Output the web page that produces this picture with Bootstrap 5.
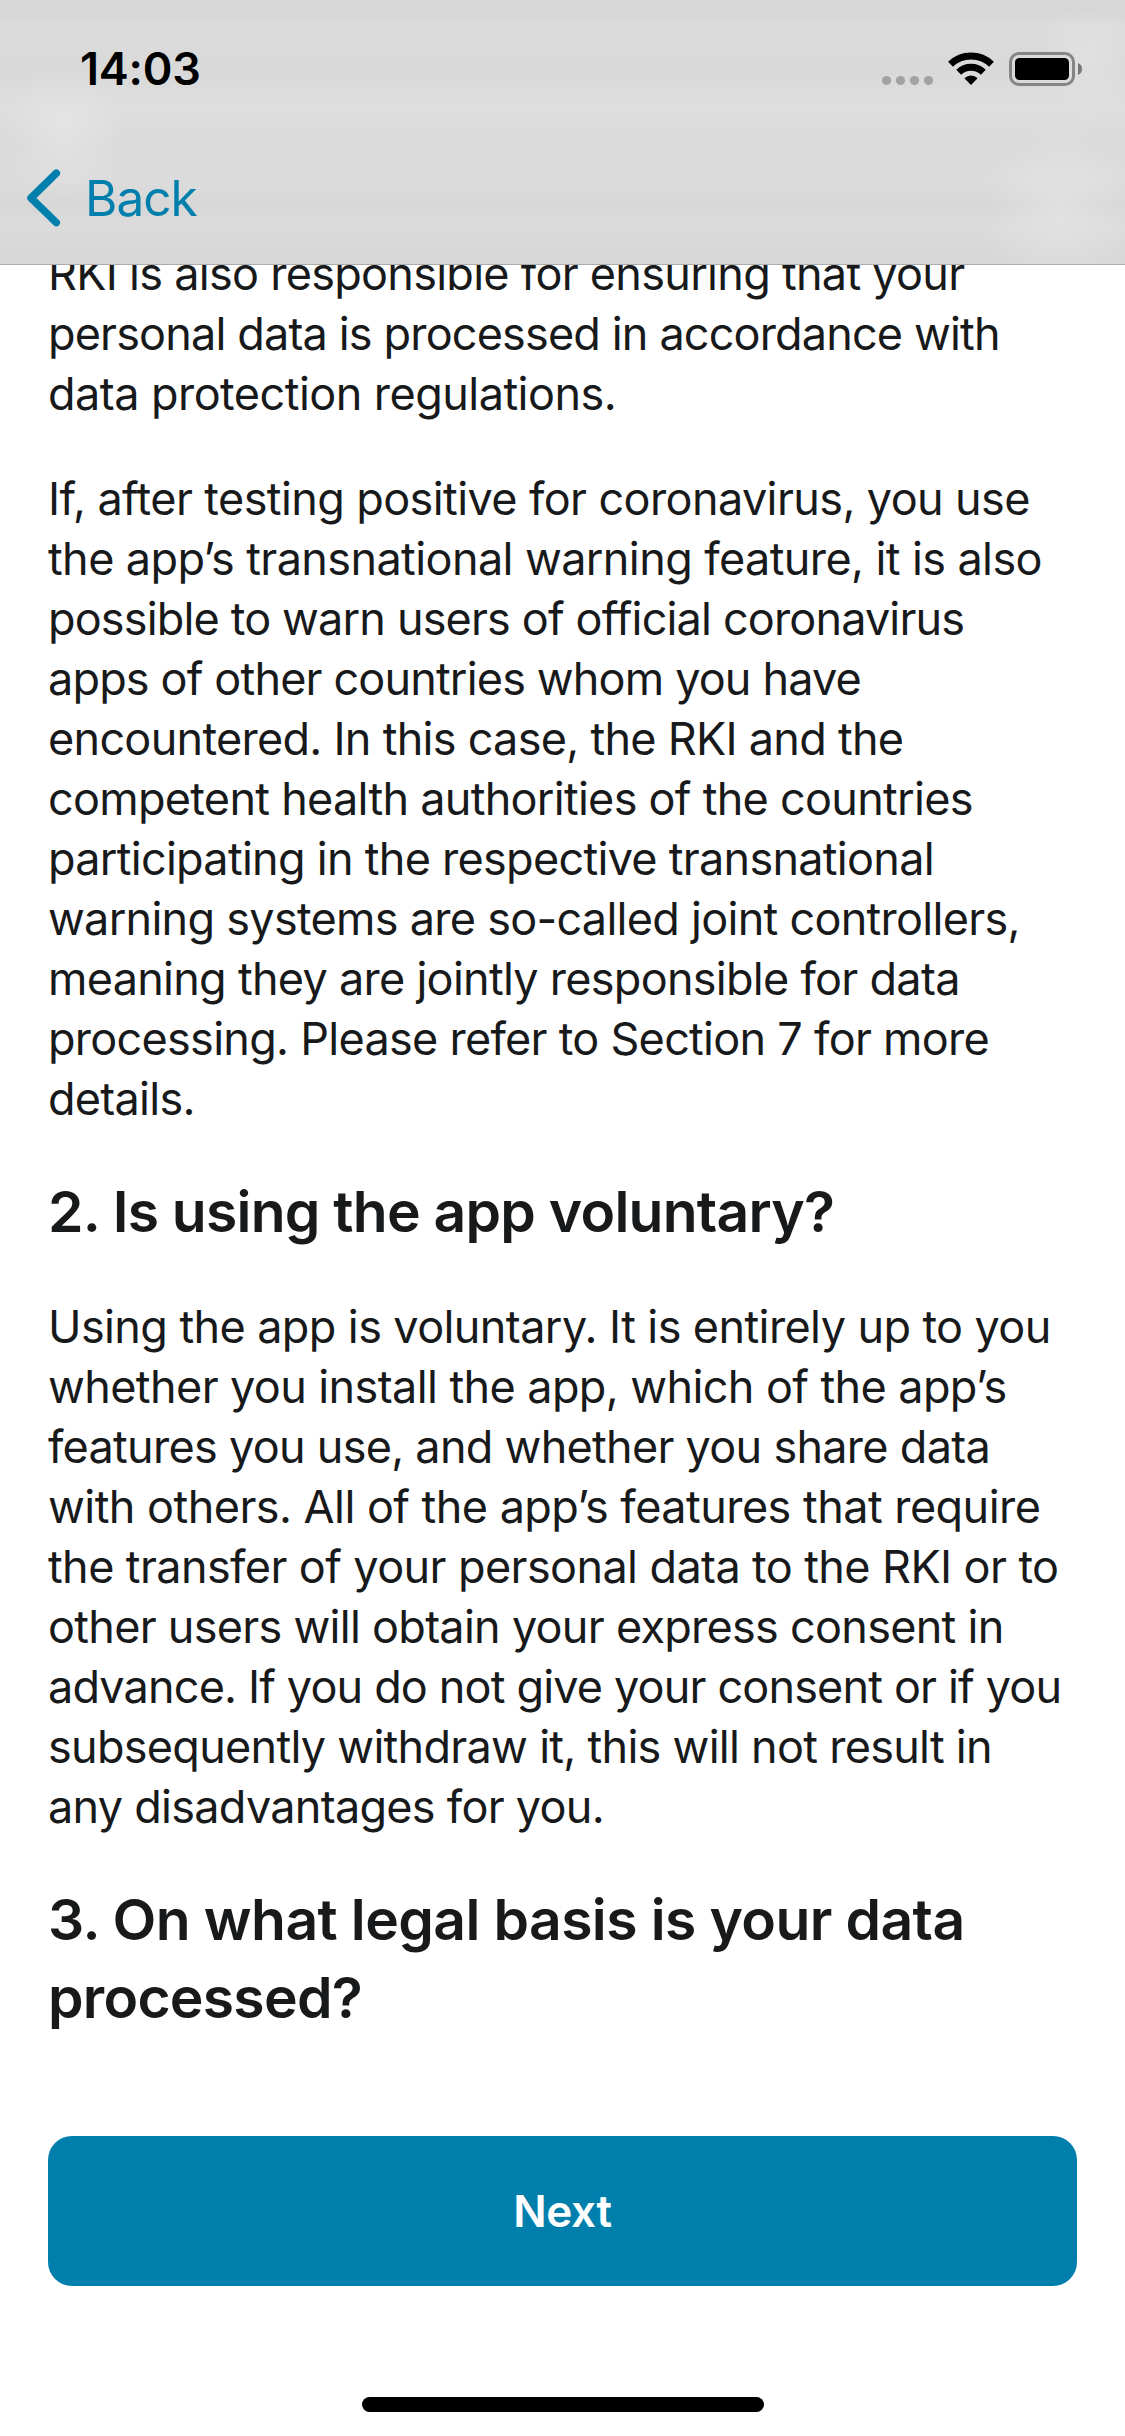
<!DOCTYPE html>
<html lang="en"><head><meta charset="utf-8"><meta name="viewport" content="width=device-width, initial-scale=1"><title>Privacy notice</title>
<link href="https://cdn.jsdelivr.net/npm/bootstrap@5.3.0/dist/css/bootstrap.min.css" rel="stylesheet">
<style>
body{font-family:Inter,sans-serif;height:2436px;overflow:hidden;background:#fff;color:#17191a}
.topbar{height:265px;background:radial-gradient(ellipse 60px 70px at 65px 130px,rgba(255,255,255,.22),transparent),radial-gradient(ellipse 80px 90px at 1060px 210px,rgba(255,255,255,.22),transparent),radial-gradient(ellipse 50px 60px at 1090px 60px,rgba(255,255,255,.18),transparent),linear-gradient(#d8d8d8,#d6d6d6 12px,#dcdcdc 25px,#d9d9d9 70px,#dedede 110px,#dadada 145px,#dcdcdc 180px,#d7d7d7 205px,#dbdbdb 225px,#d7d7d7);border-bottom:1px solid #acacac}
.status{height:138px;padding-left:80px}
.clock{font-size:45px;font-weight:600;color:#000;line-height:138px;letter-spacing:-.2px}
.backlink{height:120px;padding-left:26px;color:#007fad;font-size:49.5px;letter-spacing:-1px}
.backlink svg{margin-right:-1px}
.article{height:1871px;padding:0 48px}
.article p{font-size:45px;line-height:60px;margin:0 0 45px;letter-spacing:-.72px;white-space:nowrap}
.article p:first-child{margin-top:-21px}
.article h2{font-size:57px;line-height:78px;font-weight:600;margin:-1px 0 46px;letter-spacing:-.75px;white-space:nowrap}
.article .loose{letter-spacing:-.6px}
.article .looser{letter-spacing:-.54px}
.article .snug{letter-spacing:-.84px}
.next{background:#007fad;color:#fff;height:150px;border-radius:24px;font-size:44px;font-weight:600;border:0;letter-spacing:-.3px}
.homebar{width:402px;height:15px;border-radius:8px;background:#000;margin-top:111px}
</style></head><body class="d-flex flex-column">
<header class="topbar flex-shrink-0">
<div class="status d-flex justify-content-between"><span class="clock">14:03</span>
<svg width="245" height="138" viewBox="880 0 245 138"><g fill="#a2a2a4"><circle cx="886.5" cy="80.5" r="4.6"/><circle cx="900.5" cy="80.5" r="4.6"/><circle cx="914.5" cy="80.5" r="4.6"/><circle cx="928.5" cy="80.5" r="4.6"/></g>
<g fill="none" stroke="#000" stroke-width="7"><path d="M950.5 64.2A29.5 29.5 0 0 1 991.5 64.2"/><path d="M958.7 72.3A17.8 17.8 0 0 1 983.3 72.3"/></g><path d="M971 85 964.4 78.3A9.4 9.4 0 0 1 977.6 78.3Z"/>
<rect x="1010.5" y="53.5" width="63" height="31" rx="8.5" fill="none" stroke="#858585" stroke-width="3"/><rect x="1015" y="58" width="54" height="22" rx="4.5"/><path d="M1078 63Q1082 64.500 1082 69T1078 75Z" fill="#777"/></svg></div>
<a class="backlink d-flex align-items-center text-decoration-none" href="#"><svg width="60" height="60" viewBox="26 168 60 60"><path d="M56.300 173.200 31 198l25.300 24.600" fill="none" stroke="#007fad" stroke-width="7.500" stroke-linecap="round" stroke-linejoin="round"/></svg>Back</a>
</header>
<main class="article overflow-hidden flex-shrink-0">
<p>RKI is also responsible for ensuring that your<br><span class="snug">personal data is processed in accordance with</span><br><span class="looser">data protection regulations.</span></p>
<p><span class="loose">If, after testing positive for coronavirus, you use</span><br><span class="loose">the app’s transnational warning feature, it is also</span><br><span class="snug">possible to warn users of official coronavirus</span><br><span class="snug">apps of other countries whom you have</span><br>encountered. In this case, the RKI and the<br>competent health authorities of the countries<br>participating in the respective transnational<br>warning systems are so-called joint controllers,<br>meaning they are jointly responsible for data<br>processing. Please refer to Section 7 for more<br>details.</p>
<h2>2. Is using the app voluntary?</h2>
<p><span class="loose">Using the app is voluntary. It is entirely up to you</span><br><span class="loose">whether you install the app, which of the app’s</span><br>features you use, and whether you share data<br><span class="looser">with others. All of the app’s features that require</span><br><span class="loose">the transfer of your personal data to the RKI or to</span><br>other users will obtain your express consent in<br><span class="snug">advance. If you do not give your consent or if you</span><br>subsequently withdraw it, this will not result in<br>any disadvantages for you.</p>
<h2><span class="loose">3. On what legal basis is your data</span><br>processed?</h2></main>
<footer class="d-flex flex-column px-5"><button class="next btn w-100 flex-shrink-0">Next</button><div class="homebar mx-auto"></div></footer>
<script src="https://cdn.jsdelivr.net/npm/bootstrap@5.3.0/dist/js/bootstrap.bundle.min.js"></script>
</body></html>
